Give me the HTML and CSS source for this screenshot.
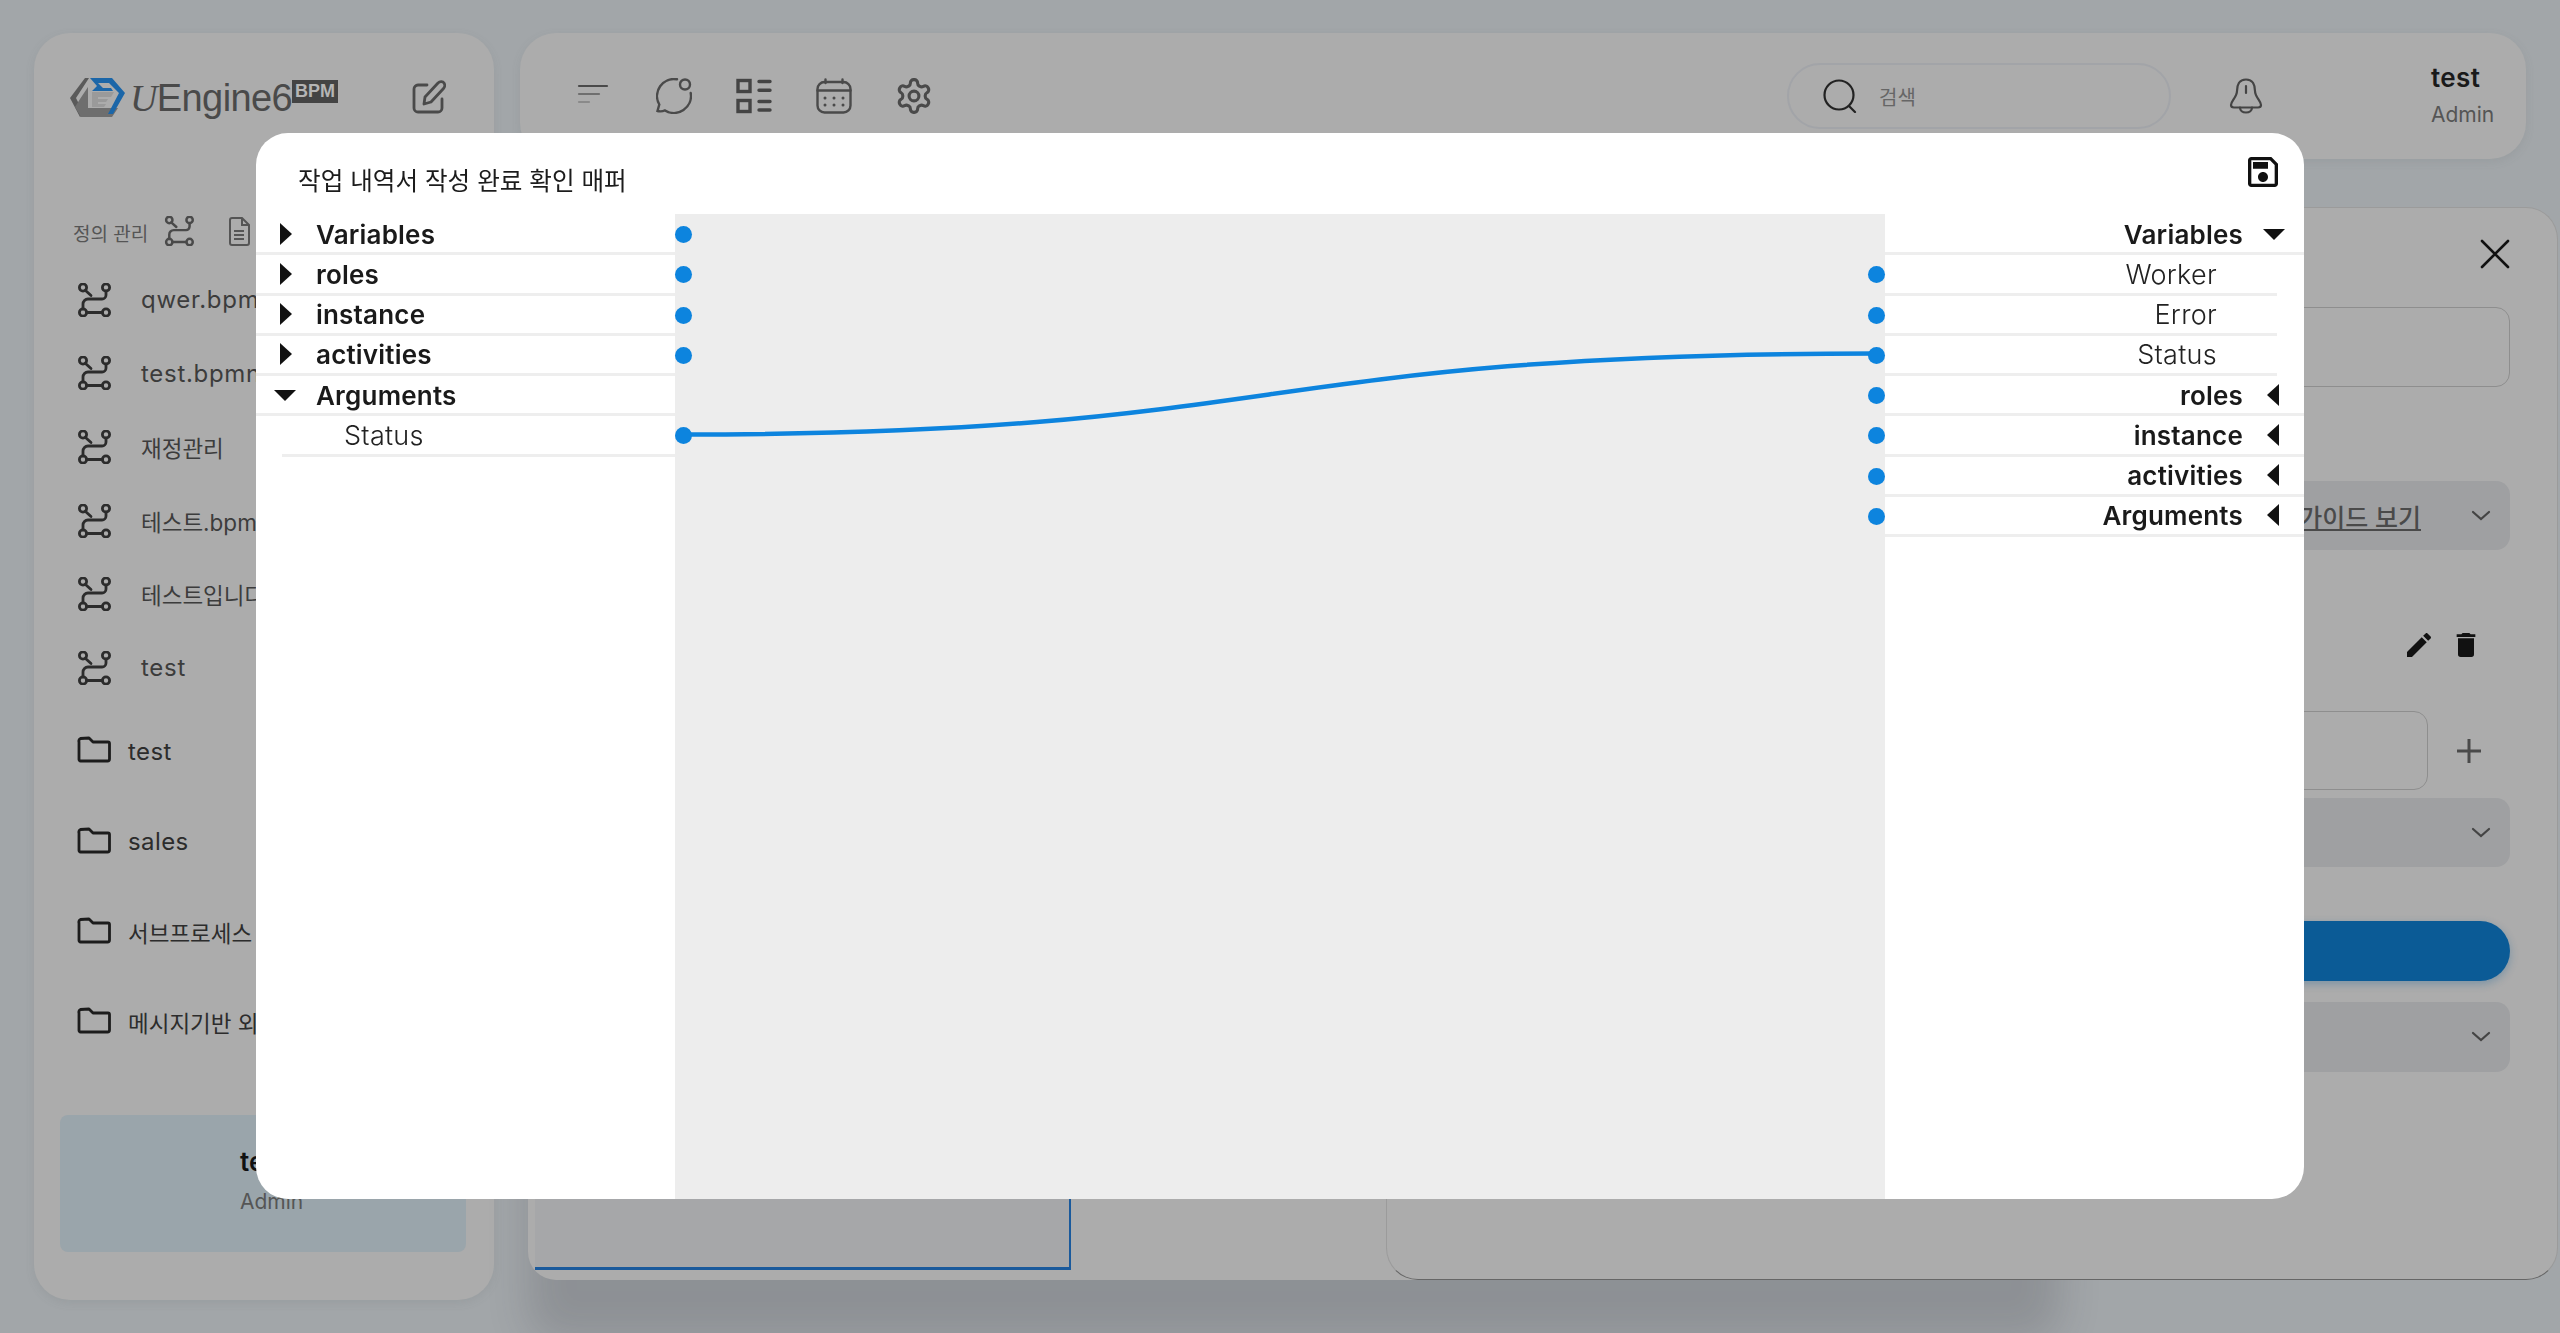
FILE: index.html
```html
<!DOCTYPE html>
<html lang="ko">
<head>
<meta charset="utf-8">
<title>uEngine6 BPM</title>
<link rel="stylesheet" href="styles.css">
</head>
<body>

<svg class="defs" width="0" height="0">
  <symbol id="i-process" viewBox="0 0 34 34">
    <g fill="none" stroke="currentColor" stroke-width="2.8" stroke-linecap="round">
      <circle cx="6" cy="4.5" r="3.6"/><circle cx="29" cy="4.5" r="3.6"/>
      <circle cx="6" cy="29.5" r="3.6"/><circle cx="29" cy="29.5" r="3.6"/>
      <path d="M29 8v4a4 4 0 0 1-4 4H11a5 5 0 0 0-5 5v5M9.5 29.5h16M8.5 7.5l5.5 5"/>
    </g>
  </symbol>
  <symbol id="i-folder" viewBox="0 0 34 27">
    <path d="M2 6a3 3 0 0 1 1.5-3.500L12 2l4 4h15a1.500 1.500 0 0 1 1.500 1.500V23a2 2 0 0 1-2 2H3.500a1.500 1.500 0 0 1-1.500-1.500z" fill="none" stroke="currentColor" stroke-width="2.8" stroke-linejoin="round"/>
  </symbol>
  <symbol id="i-chevron" viewBox="0 0 22 14">
    <path d="M3 3l8 7 8-7" fill="none" stroke="currentColor" stroke-width="2.2" stroke-linecap="round"/>
  </symbol>
</svg>

<div class="app">
  <aside class="sidebar">
    <div class="logo-row">
      <svg class="logo-mark" viewBox="0 0 55 40">
        <path d="M15 1h4L6 21l8 16-4 3L0 21z" fill="#5a5a5a"/>
        <path d="M10 22l8-12v21h30l-6 9H11l-6-10z" fill="#6e6e6e"/>
        <path d="M22 15h22l-3 5H28v2h10l-2 3h-8v2h8l-2 3H22z" fill="#9a9a9a"/>
        <path d="M20 1h22l13 15-12 21h-5l11-21-10-10H28l5 5h8l2 3H22l5-5z" fill="#1b66a8"/>
      </svg>
      <span class="logo-text"><i>U</i>Engine6</span>
      <span class="logo-badge">BPM</span>
      <svg class="logo-edit" viewBox="0 0 34 34" fill="none" stroke="#4a4a4a" stroke-width="2.8" stroke-linecap="round" stroke-linejoin="round">
        <path d="M15 5H6a4 4 0 0 0-4 4v19a4 4 0 0 0 4 4h20a4 4 0 0 0 4-4v-9"/>
        <path d="M12 24l1-7L26 3c2-2 5-1.500 6 0s1 4-.5 5.500L19 22z"/>
      </svg>
    </div>

    <div class="label-row">
      <span class="label-text">정의 관리</span>
      <svg class="label-icon"><use href="#i-process"/></svg>
      <svg class="label-doc" viewBox="0 0 22 29" fill="none" stroke="#555" stroke-width="2">
        <path d="M2 3a2 2 0 0 1 2-2h10l7 7v18a2 2 0 0 1-2 2H4a2 2 0 0 1-2-2z"/>
        <path d="M14 1v7h7M6 14h10M6 18h10M6 22h10"/>
      </svg>
    </div>

    <ul class="def-list">
      <li class="def-item"><svg class="def-icon"><use href="#i-process"/></svg>qwer.bpmn</li>
      <li class="def-item"><svg class="def-icon"><use href="#i-process"/></svg>test.bpmn</li>
      <li class="def-item ko"><svg class="def-icon"><use href="#i-process"/></svg>재정관리</li>
      <li class="def-item ko"><svg class="def-icon"><use href="#i-process"/></svg>테스트.bpmn</li>
      <li class="def-item ko"><svg class="def-icon"><use href="#i-process"/></svg>테스트입니다</li>
      <li class="def-item"><svg class="def-icon"><use href="#i-process"/></svg>test</li>
    </ul>
    <ul class="folder-list">
      <li class="folder-item"><svg class="folder-icon"><use href="#i-folder"/></svg>test</li>
      <li class="folder-item"><svg class="folder-icon"><use href="#i-folder"/></svg>sales</li>
      <li class="folder-item ko"><svg class="folder-icon"><use href="#i-folder"/></svg>서브프로세스 예제</li>
      <li class="folder-item ko"><svg class="folder-icon"><use href="#i-folder"/></svg>메시지기반 외부연동</li>
    </ul>

    <div class="side-user">
      <div class="side-user-name">test</div>
      <div class="side-user-role">Admin</div>
    </div>
  </aside>

  <div class="right">
    <header class="topbar">
      <svg class="top-icon" viewBox="0 0 36 36" fill="none" stroke-linecap="round" stroke-width="2.2">
        <path d="M3 8h28" stroke="#4a4a4a"/>
        <path d="M3 16h20" stroke="#6f6f6f"/>
        <path d="M3 24h10" stroke="#8a8a8a"/>
      </svg>
      <svg class="top-icon" viewBox="0 0 36 36" fill="none" stroke="#4a4a4a" stroke-width="2.4" stroke-linecap="round">
        <circle cx="29" cy="6.500" r="5"/>
        <path d="M21 1.300A17 17 0 0 0 3.300 26.500L1.500 33c3 .8 5.500.3 7.500-.6A17 17 0 0 0 34.700 15"/>
      </svg>
      <svg class="top-icon" viewBox="0 0 36 36" fill="none" stroke="#444" stroke-width="3.4" stroke-linecap="round">
        <rect x="2" y="2.500" width="12" height="11"/>
        <rect x="2" y="22.500" width="12" height="11"/>
        <path d="M23 3.500h11M23 12.300h11M23 23.500h11M23 32h11"/>
      </svg>
      <svg class="top-icon" viewBox="0 0 36 36" fill="none" stroke="#4a4a4a" stroke-width="2.4" stroke-linecap="round">
        <rect x="1.500" y="4" width="33" height="30.500" rx="7"/>
        <path d="M1.500 12.500h33M9.500 1.500v3.500M26.500 1.500v3.500"/>
        <path d="M9 20h.01M18 20h.01M27 20h.01M9 27h.01M18 27h.01M27 27h.01" stroke-width="3"/>
      </svg>
      <svg class="top-icon" viewBox="1 1 22 22" fill="none" stroke="#4a4a4a" stroke-width="1.9">
        <path d="M12.220 2h-.44a2 2 0 0 0-2 2v.18a2 2 0 0 1-1 1.730l-.43.250a2 2 0 0 1-2 0l-.15-.08a2 2 0 0 0-2.730.730l-.22.380a2 2 0 0 0 .730 2.730l.15.100a2 2 0 0 1 1 1.720v.510a2 2 0 0 1-1 1.740l-.15.090a2 2 0 0 0-.730 2.730l.22.380a2 2 0 0 0 2.730.730l.15-.08a2 2 0 0 1 2 0l.43.250a2 2 0 0 1 1 1.730V20a2 2 0 0 0 2 2h.44a2 2 0 0 0 2-2v-.18a2 2 0 0 1 1-1.730l.43-.25a2 2 0 0 1 2 0l.15.08a2 2 0 0 0 2.730-.730l.22-.39a2 2 0 0 0-.730-2.730l-.15-.08a2 2 0 0 1-1-1.740v-.5a2 2 0 0 1 1-1.740l.15-.09a2 2 0 0 0 .730-2.730l-.22-.38a2 2 0 0 0-2.730-.730l-.15.08a2 2 0 0 1-2 0l-.43-.25a2 2 0 0 1-1-1.730V4a2 2 0 0 0-2-2z"/>
        <circle cx="12" cy="12" r="3"/>
      </svg>

      <div class="search">
        <svg class="search-icon" viewBox="0 0 34 34" fill="none" stroke="#222" stroke-width="2.2" stroke-linecap="round">
          <circle cx="16" cy="16" r="14.5"/><path d="M26 27l6 6"/>
        </svg>
        <span class="search-text">검색</span>
      </div>

      <svg class="bell" viewBox="0 0 34 36" fill="none" stroke="#444" stroke-width="2.2" stroke-linecap="round" stroke-linejoin="round">
        <path d="M17 1.500C10 1.500 8 7.500 8 13c0 6-6 10-6 14 0 2 1.500 2.500 3 2.500h24c1.500 0 3-.5 3-2.500 0-4-6-8-6-14 0-5.500-2-11.500-9-11.500z"/>
        <path d="M17 8v7M11 29.500c0 3 2.500 5 6 5s6-2 6-5"/>
      </svg>

      <div class="top-user">
        <div class="top-user-name">test</div>
        <div class="top-user-role">Admin</div>
      </div>
    </header>

    <div class="content">
      <main class="main-panel">
        <div class="canvas"></div>
      </main>

      <section class="drawer">
        <svg class="drawer-close" viewBox="0 0 30 30" fill="none" stroke="#111" stroke-width="2.6" stroke-linecap="round">
          <path d="M2 2l26 26M28 2L2 28"/>
        </svg>
        <div class="field field-first"></div>
        <div class="select select-guide">
          <span class="guide-link">가이드 보기</span>
          <svg class="chevron"><use href="#i-chevron"/></svg>
        </div>
        <div class="actions">
          <svg class="action-icon" viewBox="0 0 24 24"><path fill="#111" d="M20.710 7.040c.39-.39.39-1.040 0-1.410l-2.340-2.340c-.37-.39-1.020-.39-1.410 0l-1.840 1.830 3.750 3.750M3 17.250V21h3.750L17.810 9.930l-3.750-3.750L3 17.250z"/></svg>
          <svg class="action-icon" viewBox="0 0 24 24"><path fill="#111" d="M19 4h-3.500l-1-1h-5l-1 1H5v2h14M6 19a2 2 0 0 0 2 2h8a2 2 0 0 0 2-2V7H6v12z"/></svg>
        </div>
        <div class="field-row">
          <div class="field"></div>
          <div class="plus">
            <svg class="plus-icon" viewBox="0 0 24 24" fill="none" stroke="#4a4a4a" stroke-width="3"><path d="M0 12h24M12 0v24"/></svg>
          </div>
        </div>
        <div class="select select-second"><svg class="chevron"><use href="#i-chevron"/></svg></div>
        <div class="primary-btn"></div>
        <div class="select select-third"><svg class="chevron"><use href="#i-chevron"/></svg></div>
      </section>
    </div>
  </div>
</div>

<div class="overlay">
  <div class="modal">
    <div class="modal-head">
      <span class="modal-title">작업 내역서 작성 완료 확인 매퍼</span>
      <svg class="modal-save" viewBox="0 0 24 24"><path fill="#111" d="M17 3H5C3.890 3 3 3.900 3 5V19C3 20.100 3.890 21 5 21H19C20.100 21 21 20.100 21 19V7L17 3M19 19H5V5H16.170L19 7.830V19M12 12C10.340 12 9 13.340 9 15S10.340 18 12 18 15 16.660 15 15 13.660 12 12 12M6 6H15V10H6V6Z"/></svg>
    </div>
    <div class="mapper">
      <div class="tree tree-left">
        <div class="row parent"><span class="arrow arrow-right"></span>Variables<span class="dot"></span></div>
        <div class="row parent"><span class="arrow arrow-right"></span>roles<span class="dot"></span></div>
        <div class="row parent"><span class="arrow arrow-right"></span>instance<span class="dot"></span></div>
        <div class="row parent"><span class="arrow arrow-right"></span>activities<span class="dot"></span></div>
        <div class="row parent"><span class="arrow arrow-down"></span>Arguments</div>
        <div class="row child">Status<span class="dot"></span></div>
      </div>

      <div class="links">
        <svg class="links-svg" viewBox="0 0 1210 985">
          <path d="M8 220.500C620 220.500 570 139.500 1201 139.500" fill="none" stroke="#0d84de" stroke-width="4.5"/>
        </svg>
      </div>

      <div class="tree tree-right">
        <div class="row parent">Variables<span class="arrow arrow-down"></span></div>
        <div class="row child">Worker<span class="dot"></span></div>
        <div class="row child">Error<span class="dot"></span></div>
        <div class="row child">Status<span class="dot"></span></div>
        <div class="row parent">roles<span class="arrow arrow-left"></span><span class="dot"></span></div>
        <div class="row parent">instance<span class="arrow arrow-left"></span><span class="dot"></span></div>
        <div class="row parent">activities<span class="arrow arrow-left"></span><span class="dot"></span></div>
        <div class="row parent">Arguments<span class="arrow arrow-left"></span><span class="dot"></span></div>
      </div>
    </div>
  </div>
</div>

</body>
</html>
```

FILE: styles.css
```css
* {
  box-sizing: border-box;
}

html,
body {
  margin: 0;
  height: 100%;
  overflow: hidden;
}

body {
  background-color: #a2a6a9;
  color: #333;
  font-family: Inter, "Noto Sans CJK KR", sans-serif;
}

ul {
  list-style: none;
  margin: 0;
  padding: 0;
}

.defs {
  display: block;
}

.app {
  display: flex;
  height: 1333px;
  padding: 33px 0 33px 34px;
}

/* sidebar */
.sidebar {
  display: flex;
  flex-direction: column;
  flex: none;
  width: 460px;
  padding-top: 44px;
  background-color: #acacac;
  border-radius: 36px;
  box-shadow: 0 3px 10px rgba(90, 95, 100, .12);
}

.logo-row {
  display: flex;
  align-items: flex-start;
  height: 40px;
  padding: 0 48px 0 36px;
}

.logo-mark {
  flex: none;
  width: 55px;
  height: 40px;
}

.logo-text {
  margin-left: 5px;
  color: #4a4a4a;
  font-family: "Liberation Sans", sans-serif;
  font-size: 38px;
  letter-spacing: -.6px;
  line-height: 42px;
  white-space: nowrap;
}

.logo-text i {
  font-family: "Liberation Serif", serif;
}

.logo-badge {
  width: 46px;
  height: 23px;
  margin-top: 3px;
  background-color: #444;
  color: #b5b5b5;
  font-family: "Liberation Sans", sans-serif;
  font-size: 18px;
  font-weight: 700;
  line-height: 23px;
  text-align: center;
}

.logo-edit {
  width: 34px;
  height: 34px;
  margin-left: auto;
  margin-top: 3px;
}

.label-row {
  display: flex;
  align-items: center;
  height: 30px;
  margin: 99px 0 17px 39px;
}

.label-text {
  width: 91px;
  padding-top: 3px;
  color: #555;
  font-size: 19px;
  white-space: nowrap;
}

.label-icon {
  width: 30px;
  height: 30px;
  color: #4a4a4a;
}

.label-doc {
  width: 22px;
  height: 29px;
  margin-left: 34px;
}

.def-item {
  display: flex;
  align-items: center;
  height: 73.6px;
  padding-left: 43px;
  color: #3c3c3c;
  font-size: 24px;
  letter-spacing: .7px;
  white-space: nowrap;
}

.def-icon {
  flex: none;
  width: 34px;
  height: 34px;
  margin-right: 30px;
  color: #2c2c2c;
}

.folder-item {
  display: flex;
  align-items: center;
  height: 90.4px;
  padding: 3px 0 0 43px;
  color: #2c2c2c;
  font-size: 24px;
  letter-spacing: .4px;
  white-space: nowrap;
}

.folder-icon {
  flex: none;
  width: 34px;
  height: 27px;
  margin: -3px 17px 0 0;
  color: #1c1c1c;
}

.def-item.ko,
.folder-item.ko {
  font-size: 22.5px;
  letter-spacing: 0;
}

.side-user {
  height: 137px;
  margin: auto 28px 48px 26px;
  padding: 31px 0 0 180px;
  background-color: #9aa5ab;
  border-radius: 8px;
}

.side-user-name {
  color: #111;
  font-size: 26px;
  font-weight: 600;
}

.side-user-role {
  margin-top: 12px;
  color: #555;
  font-size: 21px;
}

/* top bar and content */
.right {
  display: flex;
  flex-direction: column;
  flex: 1;
  min-width: 0;
  padding: 0 34px 20px 26px;
}

.topbar {
  display: flex;
  align-items: center;
  flex: none;
  gap: 44px;
  height: 126px;
  padding: 0 34px 0 56px;
  background-color: #acacac;
  border-radius: 36px;
  box-shadow: 0 3px 10px rgba(90, 95, 100, .12);
}

.top-icon {
  flex: none;
  width: 36px;
  height: 36px;
}

.search {
  display: flex;
  align-items: center;
  width: 384px;
  height: 66px;
  margin-left: auto;
  padding-left: 34px;
  border: 2px solid #a2a4a8;
  border-radius: 33px;
}

.search-icon {
  width: 34px;
  height: 34px;
}

.search-text {
  margin-left: 22px;
  color: #666;
  font-size: 20px;
}

.bell {
  flex: none;
  width: 34px;
  height: 36px;
  margin-left: 14px;
}

.top-user {
  width: 61px;
  margin-left: 124px;
  margin-top: -4px;
}

.top-user-name {
  color: #1a1a1a;
  font-size: 26px;
  font-weight: 600;
  letter-spacing: .4px;
}

.top-user-role {
  margin-top: 9px;
  color: #555;
  font-size: 21px;
  white-space: nowrap;
}

.content {
  position: relative;
  flex: 1;
  margin-top: 48px;
}

.main-panel {
  width: 1532px;
  height: 100%;
  margin-left: 8px;
  padding: 0 0 10px 7px;
  background-color: #acacac;
  border-radius: 28px;
  box-shadow: 0 60px 40px rgba(50, 50, 60, .18);
}

.canvas {
  width: 536px;
  height: 100%;
  background-color: #a6a7a9;
  border-right: 2px solid #1a5a9c;
  border-bottom: 3px solid #1a5a9c;
}

.drawer {
  position: absolute;
  top: 0;
  right: -32px;
  bottom: 0;
  display: flex;
  flex-direction: column;
  width: 1172px;
  padding: 31px 47px 0 60px;
  background-color: #acacac;
  border: 1px solid #9b9b9b;
  border-bottom-color: #666;
  border-radius: 32px;
}

.drawer-close {
  align-self: flex-end;
  width: 30px;
  height: 30px;
  flex: none;
}

.field {
  flex: 1;
  border: 1.5px solid #8e8e8e;
  border-radius: 14px;
}

.field-first {
  flex: none;
  height: 80px;
  margin-top: 38px;
}

.select {
  display: flex;
  align-items: center;
  justify-content: flex-end;
  flex: none;
  height: 69px;
  padding-right: 18px;
  background-color: #9fa0a2;
  border-radius: 14px;
}

.select-guide {
  margin-top: 94px;
}

.guide-link {
  margin-right: 49px;
  color: #4a4a4a;
  font-size: 25px;
  font-weight: 500;
  text-decoration: underline;
}

.chevron {
  width: 22px;
  height: 14px;
  color: #444;
}

.actions {
  display: flex;
  justify-content: flex-end;
  gap: 15px;
  height: 32px;
  margin-top: 79px;
  padding-right: 28px;
}

.action-icon {
  width: 32px;
  height: 32px;
}

.field-row {
  display: flex;
  flex: none;
  height: 79px;
  margin-top: 50px;
}

.plus {
  display: flex;
  align-items: center;
  justify-content: center;
  flex: none;
  width: 82px;
}

.plus-icon {
  width: 24px;
  height: 24px;
}

.select-second {
  margin-top: 8px;
}

.primary-btn {
  flex: none;
  height: 60px;
  margin-top: 54px;
  background-color: #0b5b96;
  border-radius: 30px;
  box-shadow: 0 3px 8px rgba(11, 91, 150, .3);
}

.select-third {
  height: 70px;
  margin-top: 21px;
}

/* mapper dialog */
.overlay {
  position: fixed;
  top: 0;
  left: 0;
  display: flex;
  align-items: center;
  justify-content: center;
  width: 100%;
  height: 100%;
  padding-bottom: 1px;
}

.modal {
  display: flex;
  flex-direction: column;
  width: 2048px;
  height: 1066px;
  overflow: hidden;
  background-color: #fff;
  border-radius: 32px;
}

.modal-head {
  display: flex;
  flex: none;
  align-items: flex-start;
  justify-content: space-between;
  height: 81px;
  padding: 31px 21px 0 42px;
  color: #1c1c1c;
}

.modal-title {
  font-size: 24.6px;
  line-height: 34px;
}

.modal-save {
  width: 40px;
  height: 40px;
  margin-top: -12px;
}

.mapper {
  display: grid;
  flex: 1;
  grid-template-columns: 419px 1fr 419px;
  min-height: 0;
}

.tree {
  position: relative;
  z-index: 1;
  padding-top: 1px;
}

.row {
  position: relative;
  display: flex;
  align-items: center;
  height: 40.25px;
  padding-top: 1px;
  color: #222;
  font-size: 27px;
  font-weight: 300;
  letter-spacing: .3px;
  border-bottom: 3px solid #eeeeee;
}

.parent {
  color: #1a1a1a;
  font-size: 26px;
  font-weight: 600;
  letter-spacing: .2px;
}

.tree-left .row {
  padding-left: 60px;
}

.tree-left .child {
  margin-left: 26px;
  padding-left: 62px;
}

.tree-right .row {
  justify-content: flex-end;
  padding-right: 61px;
}

.tree-right .child {
  margin-right: 27px;
  padding-right: 60px;
}

.arrow {
  position: absolute;
  top: 50%;
  width: 0;
  height: 0;
  border-style: solid;
  border-color: transparent;
}

.arrow-right {
  left: 24px;
  margin-top: -11px;
  border-width: 11px 0 11px 12px;
  border-left-color: #111;
}

.arrow-down {
  margin-top: -5px;
  border-width: 11px 11px 0 11px;
  border-top-color: #111;
}

.tree-left .arrow-down {
  left: 18px;
}

.tree-right .arrow-down {
  right: 19px;
}

.arrow-left {
  right: 25px;
  margin-top: -11px;
  border-width: 11px 12px 11px 0;
  border-right-color: #111;
}

.dot {
  position: absolute;
  top: 11px;
  width: 17px;
  height: 17px;
  background-color: #0d84de;
  border-radius: 50%;
}

.tree-left .dot {
  right: -17px;
}

.tree-right .dot {
  left: -17px;
}

.links {
  position: relative;
  background-color: #ededed;
}

.links-svg {
  position: absolute;
  top: 0;
  left: 0;
  width: 100%;
  height: 100%;
}
```
